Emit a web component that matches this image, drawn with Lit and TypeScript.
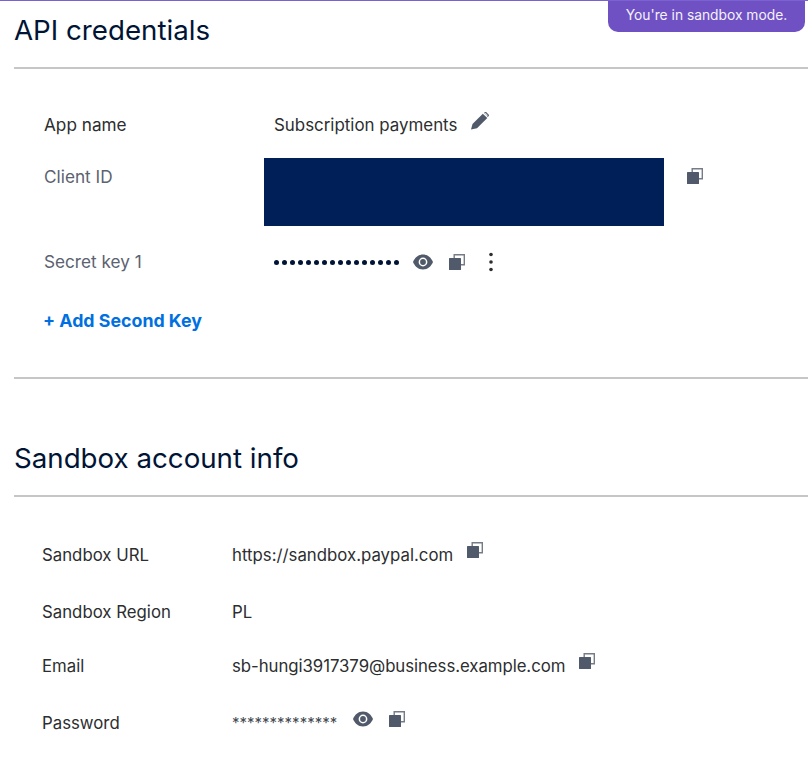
import { LitElement, html, css } from "lit";
import { customElement } from "lit/decorators.js";

const copy = html`<svg class="ic" width="16" height="16" viewBox="0 0 16 16"><path d="M4.500 0H16v11.500H12v-1.400h2.600V1.400H5.900V4H4.500z" fill="#757c88"/><rect x="0" y="4" width="12" height="12" rx=".5" fill="#515a6a"/></svg>`;
const eye = html`<svg class="ic" width="20" height="16" viewBox="0 0 20 16"><path fill-rule="evenodd" d="M10 .5C5.200.5 1.600 4 0 8c1.600 4 5.200 7.500 10 7.500S18.400 12 20 8C18.400 4 14.800.5 10 .5zM10 3.600a4.400 4.400 0 1 1 0 8.800 4.400 4.400 0 0 1 0-8.800z" fill="#515a6a"/><circle cx="10" cy="8" r="2.900" fill="#515a6a"/></svg>`;
const pencil = html`<svg class="ic" width="18" height="18" viewBox="0 0 18 18"><path d="M0 17.400 1.500 12 11.800 1.700l4.500 4.400L6 16.200z" fill="#515a6a"/><path d="M13 .9 14 0q.6-.3 1.100.1l2.700 2.700q.4.500 0 1L16.900 4.900z" fill="#515a6a"/><path d="M13.300 1.600l1.100-.9 2.500 2.500-1 1z" fill="#fff" opacity=".75"/></svg>`;
const kebab = html`<svg class="ic" width="6" height="20" viewBox="0 0 6 20"><circle cx="3" cy="2.500" r="1.800" fill="#2c2e2f"/><circle cx="3" cy="10" r="1.800" fill="#2c2e2f"/><circle cx="3" cy="17.500" r="1.800" fill="#2c2e2f"/></svg>`;

@customElement("app-root")
export class AppRoot extends LitElement {
  static styles = css`
    :host { display: block; width: 808px; height: 762px; overflow: hidden; background: #fff; position: relative; font-family: Inter, "Noto Sans", sans-serif; color: #2c2e2f; box-sizing: border-box; border-top: 1px solid #7b62d3; }
    .badge { position: absolute; top: 0; right: 3px; width: 197px; height: 31px; background: #6f51c4; color: #f4f1fb; border-radius: 0 0 10px 10px; font-size: 13.800px; display: flex; align-items: center; justify-content: center; box-sizing: border-box; padding-bottom: 3px; }
    .section { padding-left: 14px; }
    h2 { margin: 0; font-weight: 400; font-size: 27.700px; line-height: 32px; color: #001435; }
    .h1 { padding-top: 13px; padding-bottom: 21px; }
    .h2 { padding-top: 63px; padding-bottom: 21px; }
    hr { margin: 0; border: 0; height: 2px; background: #c6c6c6; }
    .api { padding: 44px 0 0 30px; display: flex; flex-direction: column; }
    .row { display: flex; align-items: flex-start; font-size: 16.800px; line-height: 24px; }
    .api .lbl { width: 230px; flex: none; font-size: 17.200px; }
    .api .val { font-size: 16.900px; }
    .muted { color: #5b6270; }
    .val { display: flex; align-items: center; }
    .ic { display: block; flex: none; }
    .r1 { height: 45px; }
    .r1 .pencil { margin: -8px 0 0 14px; }
    .r2 { height: 73px; }
    .r2 .lbl { padding-top: 7px; }
    .block { width: 400px; height: 68px; background: #001f59; margin-left: -10px; }
    .r2 .ic { margin: 10px 0 0 23px; }
    .r3 { padding-top: 18px; height: 24px; }
    .r3 .val { padding-top: 3px; }
    .r3 .lbl { padding-top: 1px; }
    .dots { width: 128px; display: flex; }
    .dots i { display: block; width: 5px; height: 5px; border-radius: 50%; background: #001435; margin-right: 3px; }
    .r3 .eye { margin-left: 11px; }
    .r3 .copy { margin-left: 16px; }
    .r3 .keb { margin-left: 23px; }
    .add { margin: 36px 0 0 -1px; font-weight: 700; font-size: 17.800px; line-height: 24px; color: #0070e0; height: 68px; }
    .acct { padding: 46px 0 0 28px; display: flex; flex-direction: column; }
    .acct .lbl { width: 190px; flex: none; }
    .a1 { height: 57px; } .a2 { height: 54px; } .a3 { height: 57px; }
    .a1 .ic, .a3 .ic { margin: -10px 0 0 14px; }
    .a3 .val { letter-spacing: -0.06px; }
    .a4 .stars { width: 106px; font-size: 15px; color: #444a52; }
    .a4 .eye { margin: -8px 0 0 15px; }
    .a4 .copy { margin: -8px 0 0 16px; }
  `;
  render() {
    return html`
      <div class="badge">You're in sandbox mode.</div>
      <div class="section">
        <div class="h1"><h2>API credentials</h2></div>
        <hr />
        <div class="api">
          <div class="row r1"><div class="lbl">App name</div><div class="val">Subscription payments<span class="pencil">${pencil}</span></div></div>
          <div class="row r2"><div class="lbl muted">Client ID</div><div class="block"></div>${copy}</div>
          <div class="row r3"><div class="lbl muted">Secret key 1</div>
            <div class="val"><span class="dots">${Array.from({ length: 16 }, () => html`<i></i>`)}</span><span class="eye">${eye}</span><span class="copy">${copy}</span><span class="keb">${kebab}</span></div>
          </div>
          <div class="add">+ Add Second Key</div>
        </div>
        <hr />
        <div class="h2"><h2>Sandbox account info</h2></div>
        <hr />
        <div class="acct">
          <div class="row a1"><div class="lbl">Sandbox URL</div><div class="val">https://sandbox.paypal.com${copy}</div></div>
          <div class="row a2"><div class="lbl">Sandbox Region</div><div class="val">PL</div></div>
          <div class="row a3"><div class="lbl">Email</div><div class="val">sb-hungi3917379@business.example.com${copy}</div></div>
          <div class="row a4"><div class="lbl">Password</div><div class="val"><span class="stars">**************</span><span class="eye">${eye}</span><span class="copy">${copy}</span></div></div>
        </div>
      </div>
    `;
  }
}
